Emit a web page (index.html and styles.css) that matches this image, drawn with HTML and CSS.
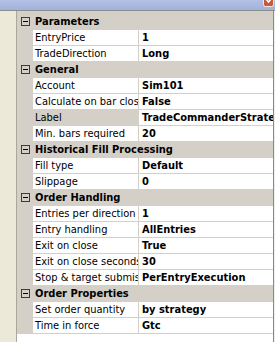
FILE: index.html
```html
<!DOCTYPE html>
<html>
<head>
<meta charset="utf-8">
<link rel="stylesheet" href="styles.css">
</head>
<body>
<div class="window">
  <div class="titlebar">
    <svg class="close" width="11" height="7" viewBox="0 0 11 7">
      <rect x="0.5" y="-8" width="10" height="14.5" rx="2" fill="#c8593d" stroke="#f4e8e4"/>
      <path d="M3 -1 L5.5 2 L8 -1" stroke="#fff" stroke-width="1.6" fill="none"/>
    </svg>
  </div>
  <div class="main">
    <div class="side"></div>
    <div class="grid">
      <div class="cat"><span class="margin"><span class="exp"></span></span><span class="cat-name">Parameters</span></div>
      <div class="prop"><span class="margin"></span><span class="name">EntryPrice</span><span class="val">1</span></div>
      <div class="prop"><span class="margin"></span><span class="name">TradeDirection</span><span class="val">Long</span></div>
      <div class="cat"><span class="margin"><span class="exp"></span></span><span class="cat-name">General</span></div>
      <div class="prop"><span class="margin"></span><span class="name">Account</span><span class="val">Sim101</span></div>
      <div class="prop"><span class="margin"></span><span class="name">Calculate on bar close</span><span class="val">False</span></div>
      <div class="prop selected"><span class="margin"></span><span class="name">Label</span><span class="val">TradeCommanderStrategy</span></div>
      <div class="prop"><span class="margin"></span><span class="name">Min. bars required</span><span class="val">20</span></div>
      <div class="cat"><span class="margin"><span class="exp"></span></span><span class="cat-name">Historical Fill Processing</span></div>
      <div class="prop"><span class="margin"></span><span class="name">Fill type</span><span class="val">Default</span></div>
      <div class="prop"><span class="margin"></span><span class="name">Slippage</span><span class="val">0</span></div>
      <div class="cat"><span class="margin"><span class="exp"></span></span><span class="cat-name">Order Handling</span></div>
      <div class="prop"><span class="margin"></span><span class="name">Entries per direction</span><span class="val">1</span></div>
      <div class="prop"><span class="margin"></span><span class="name">Entry handling</span><span class="val">AllEntries</span></div>
      <div class="prop"><span class="margin"></span><span class="name">Exit on close</span><span class="val">True</span></div>
      <div class="prop"><span class="margin"></span><span class="name">Exit on close seconds</span><span class="val">30</span></div>
      <div class="prop"><span class="margin"></span><span class="name">Stop &amp; target submission</span><span class="val">PerEntryExecution</span></div>
      <div class="cat"><span class="margin"><span class="exp"></span></span><span class="cat-name">Order Properties</span></div>
      <div class="prop"><span class="margin"></span><span class="name">Set order quantity</span><span class="val">by strategy</span></div>
      <div class="prop"><span class="margin"></span><span class="name">Time in force</span><span class="val">Gtc</span></div>
      <div class="rest"></div>
    </div>
    <div class="edge"></div>
  </div>
</div>
</body>
</html>
```
FILE: styles.css
```css
html, body {
  margin: 0;
  padding: 0;
}
body {
  width: 275px;
  height: 342px;
  overflow: hidden;
  background: #fff;
  font-family: "DejaVu Sans Condensed", "DejaVu Sans", sans-serif;
  font-stretch: condensed;
  font-size: 11px;
  color: #000;
}
.window {
  display: flex;
  flex-direction: column;
  height: 342px;
}
.titlebar {
  height: 10px;
  flex: none;
  background: linear-gradient(#b2c1e5, #a1b2da);
  border-bottom: 1px solid #8b8e8e;
  display: flex;
  justify-content: flex-end;
  align-items: flex-start;
}
.close {
  display: block;
  margin-right: 1px;
}
.main {
  flex: 1;
  display: flex;
  min-height: 0;
}
.side {
  width: 16px;
  flex: none;
  background: #ece9d8;
  border-right: 1px solid #aca899;
}
.grid {
  flex: 1;
  display: flex;
  flex-direction: column;
  border-top: 3px solid #d4d0c8;
  background: #fff;
  min-width: 0;
}
.cat, .prop {
  display: grid;
  grid-template-columns: 16px 106px 1fr;
  height: 15px;
  line-height: 15px;
  flex: none;
  white-space: nowrap;
  border-bottom: 1px solid #d4d0c8;
}
.cat {
  background: #d4d0c8;
}
.margin {
  background: #d4d0c8;
  display: flex;
  align-items: center;
  padding-left: 4px;
}
.exp {
  width: 7px;
  height: 7px;
  border: 1px solid #3c3c3c;
  position: relative;
  display: block;
}
.exp::after {
  content: "";
  position: absolute;
  left: 1px;
  top: 3px;
  width: 5px;
  height: 1px;
  background: #000;
}
.cat-name {
  grid-column: 2 / 4;
  font-weight: bold;
  padding-left: 2px;
  overflow: hidden;
}
.name {
  background: #fff;
  border-right: 1px solid #d4d0c8;
  padding-left: 2px;
  overflow: hidden;
}
.selected .name {
  background: #d4d0c8;
}
.val {
  padding-left: 3px;
  font-weight: bold;
  overflow: hidden;
}
.rest {
  flex: 1;
}
.edge {
  width: 1px;
  flex: none;
  background: #8c8c7c;
  border-right: 1px solid #eeeeee;
}
```
